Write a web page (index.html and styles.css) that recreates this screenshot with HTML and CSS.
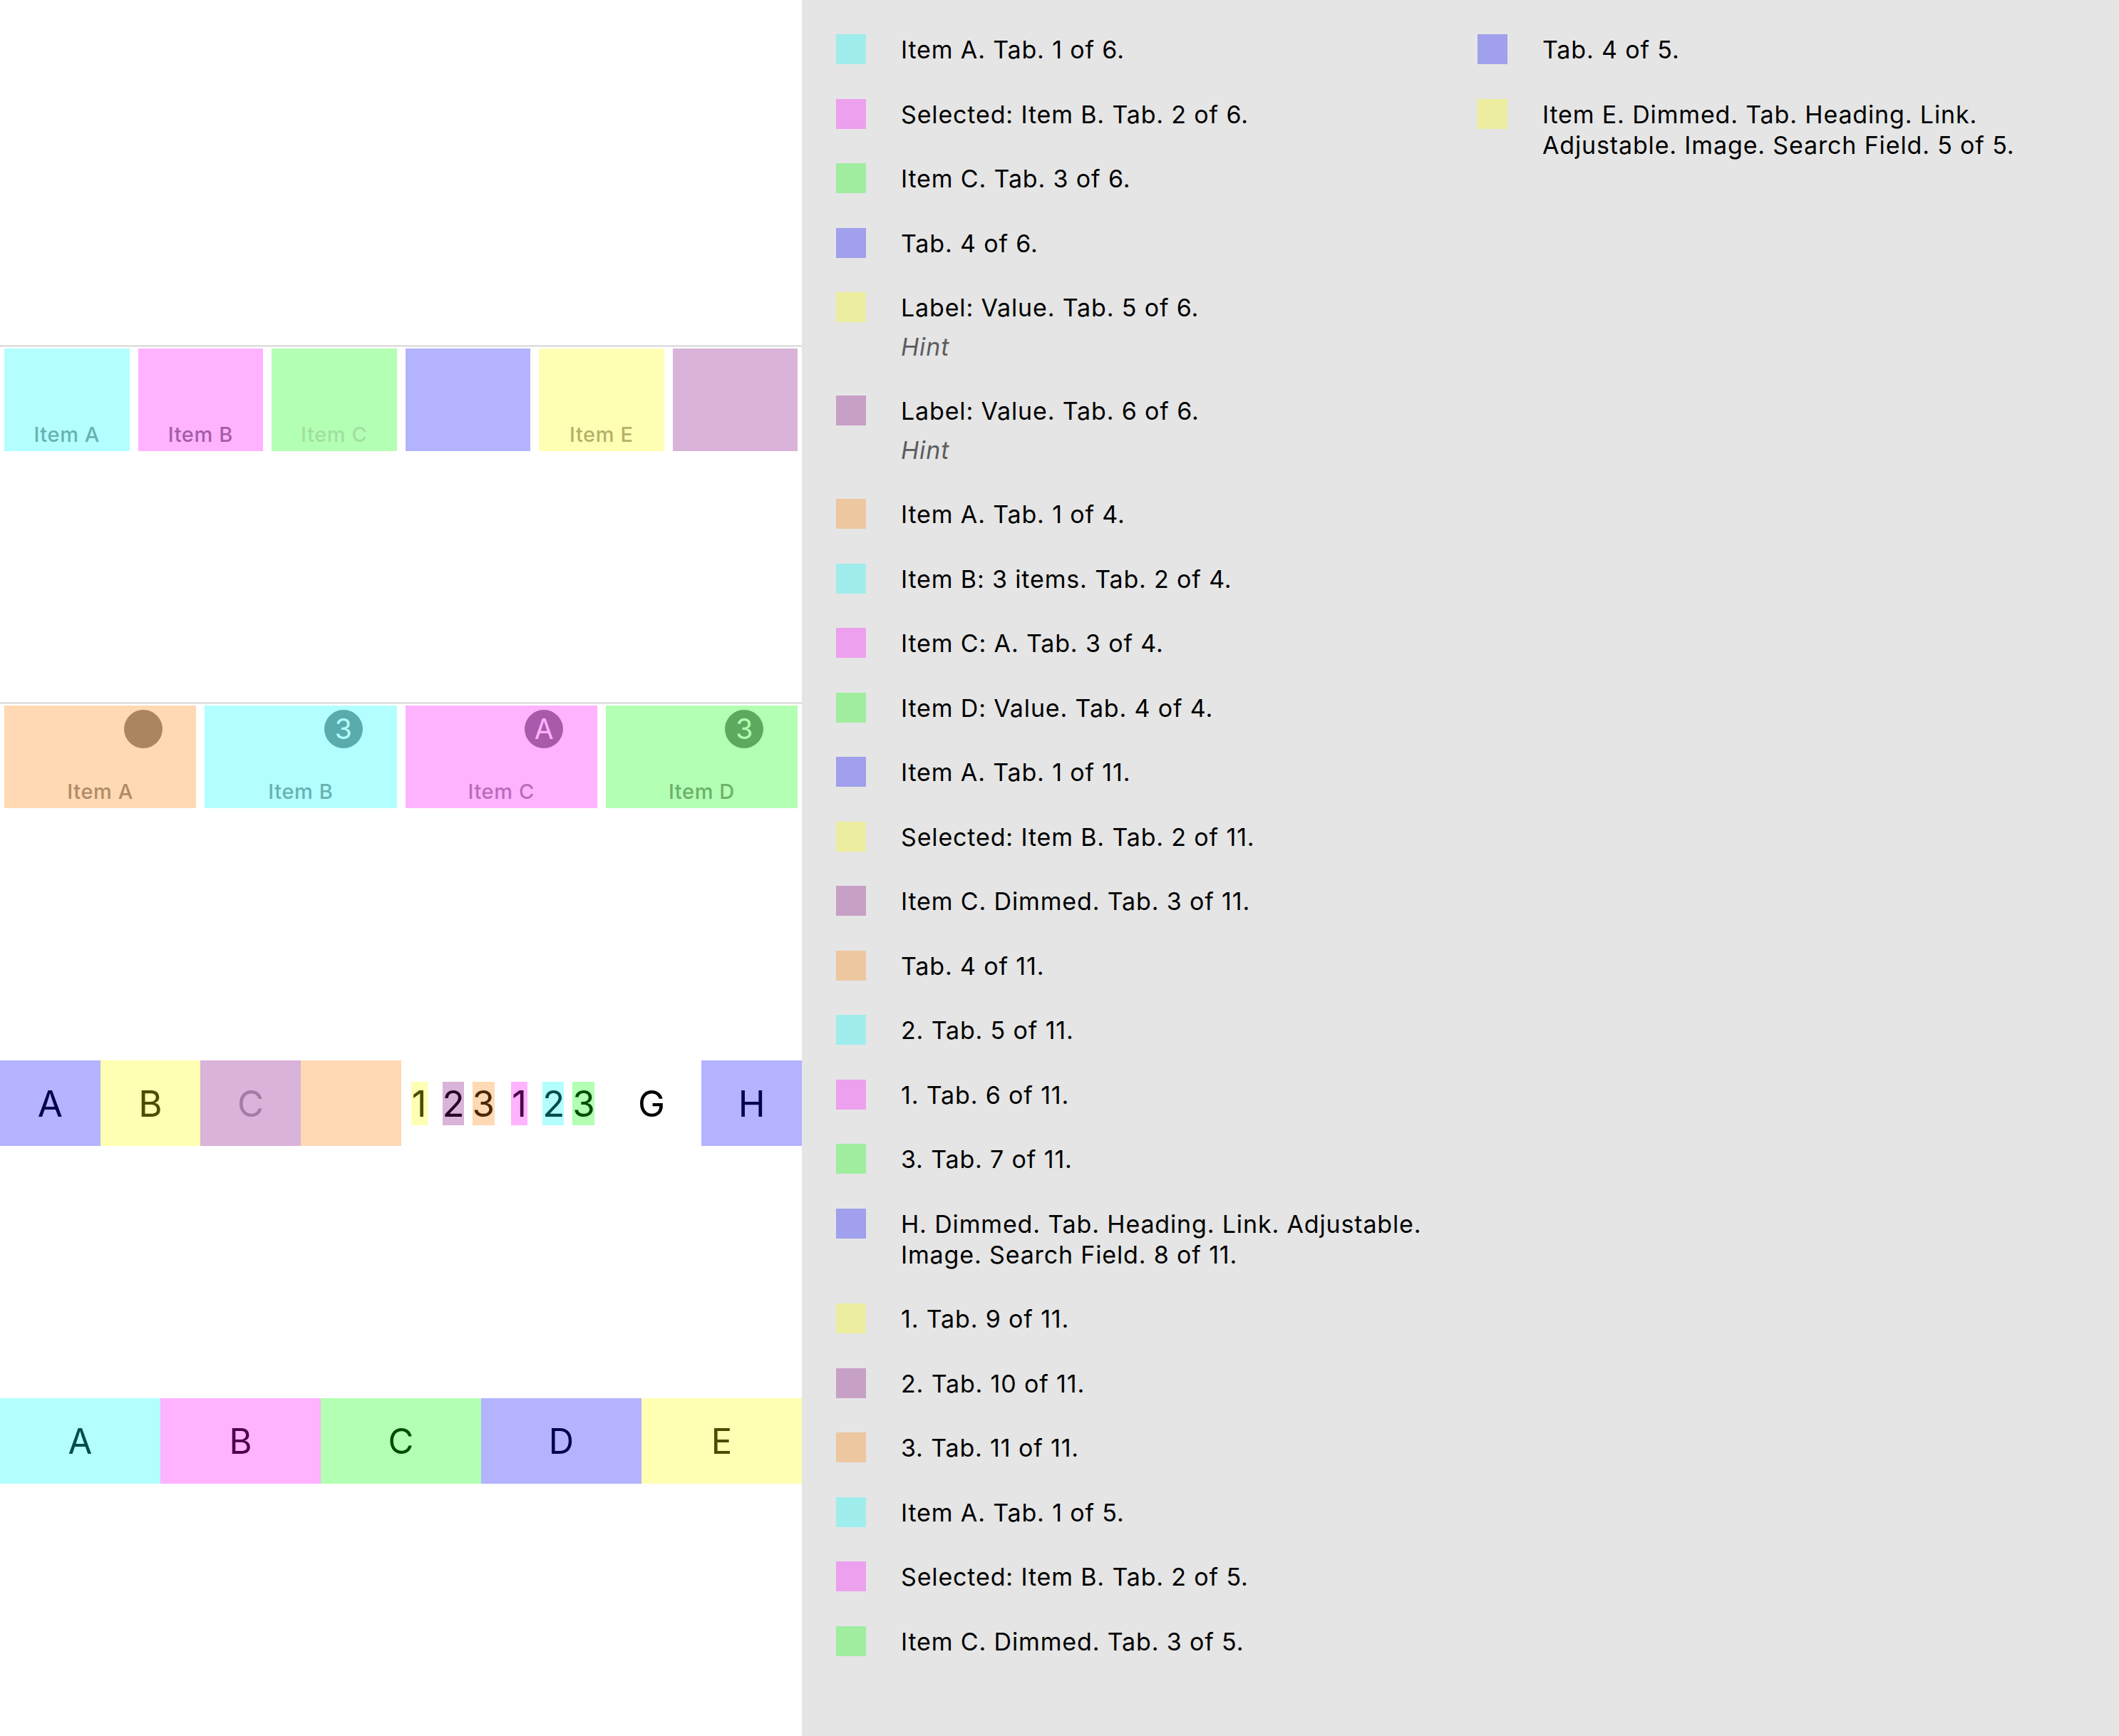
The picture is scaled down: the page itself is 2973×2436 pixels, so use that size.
FILE: index.html
```html
<!DOCTYPE html>
<html lang="en">
<head>
<meta charset="utf-8">
<title>Tab bar accessibility</title>
<link rel="stylesheet" href="styles.css">
</head>
<body>
<div class="page">
  <main class="screen">
    <div class="tabbar">
      <div class="tab bg-cyan"><span class="tab-label c-teal">Item A</span></div>
      <div class="tab bg-magenta"><span class="tab-label c-plum">Item B</span></div>
      <div class="tab bg-green"><span class="tab-label c-faint">Item C</span></div>
      <div class="tab bg-blue"></div>
      <div class="tab bg-yellow"><span class="tab-label c-olive">Item E</span></div>
      <div class="tab bg-purple"></div>
    </div>

    <div class="tabbar tabbar-badged">
      <div class="tab bg-orange"><span class="badge badge-brown"></span><span class="tab-label c-brown">Item A</span></div>
      <div class="tab bg-cyan"><span class="badge badge-teal">3</span><span class="tab-label c-teal">Item B</span></div>
      <div class="tab bg-magenta"><span class="badge badge-plum">A</span><span class="tab-label c-pink">Item C</span></div>
      <div class="tab bg-green"><span class="badge badge-green">3</span><span class="tab-label c-leaf">Item D</span></div>
    </div>

    <div class="segbar segbar-eight">
      <div class="seg bg-blue t-navy">A</div>
      <div class="seg bg-yellow t-olive">B</div>
      <div class="seg bg-purple t-dim">C</div>
      <div class="seg bg-orange"></div>
      <div class="seg seg-group">
        <span class="chip chip-one bg-yellow t-olive">1</span>
        <span class="chip chip-two bg-purple t-grape">2</span>
        <span class="chip chip-three bg-orange t-rust">3</span>
      </div>
      <div class="seg seg-group">
        <span class="chip chip-one bg-magenta t-plum">1</span>
        <span class="chip chip-two bg-cyan t-teal">2</span>
        <span class="chip chip-three bg-green t-forest">3</span>
      </div>
      <div class="seg t-black">G</div>
      <div class="seg bg-blue t-navy">H</div>
    </div>

    <div class="segbar segbar-five">
      <div class="seg bg-cyan t-teal">A</div>
      <div class="seg bg-magenta t-plum">B</div>
      <div class="seg bg-green t-forest">C</div>
      <div class="seg bg-blue t-navy">D</div>
      <div class="seg bg-yellow t-olive">E</div>
    </div>
  </main>

  <aside class="ax-list">
    <div class="ax-row"><span class="sw sw-cyan"></span><div class="ax-text">Item A. Tab. 1 of 6.</div></div>
    <div class="ax-row"><span class="sw sw-magenta"></span><div class="ax-text">Selected: Item B. Tab. 2 of 6.</div></div>
    <div class="ax-row"><span class="sw sw-green"></span><div class="ax-text">Item C. Tab. 3 of 6.</div></div>
    <div class="ax-row"><span class="sw sw-blue"></span><div class="ax-text">Tab. 4 of 6.</div></div>
    <div class="ax-row"><span class="sw sw-yellow"></span><div class="ax-text">Label: Value. Tab. 5 of 6.<div class="ax-hint">Hint</div></div></div>
    <div class="ax-row"><span class="sw sw-purple"></span><div class="ax-text">Label: Value. Tab. 6 of 6.<div class="ax-hint">Hint</div></div></div>
    <div class="ax-row"><span class="sw sw-orange"></span><div class="ax-text">Item A. Tab. 1 of 4.</div></div>
    <div class="ax-row"><span class="sw sw-cyan"></span><div class="ax-text">Item B: 3 items. Tab. 2 of 4.</div></div>
    <div class="ax-row"><span class="sw sw-magenta"></span><div class="ax-text">Item C: A. Tab. 3 of 4.</div></div>
    <div class="ax-row"><span class="sw sw-green"></span><div class="ax-text">Item D: Value. Tab. 4 of 4.</div></div>
    <div class="ax-row"><span class="sw sw-blue"></span><div class="ax-text">Item A. Tab. 1 of 11.</div></div>
    <div class="ax-row"><span class="sw sw-yellow"></span><div class="ax-text">Selected: Item B. Tab. 2 of 11.</div></div>
    <div class="ax-row"><span class="sw sw-purple"></span><div class="ax-text">Item C. Dimmed. Tab. 3 of 11.</div></div>
    <div class="ax-row"><span class="sw sw-orange"></span><div class="ax-text">Tab. 4 of 11.</div></div>
    <div class="ax-row"><span class="sw sw-cyan"></span><div class="ax-text">2. Tab. 5 of 11.</div></div>
    <div class="ax-row"><span class="sw sw-magenta"></span><div class="ax-text">1. Tab. 6 of 11.</div></div>
    <div class="ax-row"><span class="sw sw-green"></span><div class="ax-text">3. Tab. 7 of 11.</div></div>
    <div class="ax-row"><span class="sw sw-blue"></span><div class="ax-text">H. Dimmed. Tab. Heading. Link. Adjustable. Image. Search Field. 8 of 11.</div></div>
    <div class="ax-row"><span class="sw sw-yellow"></span><div class="ax-text">1. Tab. 9 of 11.</div></div>
    <div class="ax-row"><span class="sw sw-purple"></span><div class="ax-text">2. Tab. 10 of 11.</div></div>
    <div class="ax-row"><span class="sw sw-orange"></span><div class="ax-text">3. Tab. 11 of 11.</div></div>
    <div class="ax-row"><span class="sw sw-cyan"></span><div class="ax-text">Item A. Tab. 1 of 5.</div></div>
    <div class="ax-row"><span class="sw sw-magenta"></span><div class="ax-text">Selected: Item B. Tab. 2 of 5.</div></div>
    <div class="ax-row"><span class="sw sw-green"></span><div class="ax-text">Item C. Dimmed. Tab. 3 of 5.</div></div>
    <div class="ax-row"><span class="sw sw-blue"></span><div class="ax-text">Tab. 4 of 5.</div></div>
    <div class="ax-row"><span class="sw sw-yellow"></span><div class="ax-text">Item E. Dimmed. Tab. Heading. Link. Adjustable. Image. Search Field. 5 of 5.</div></div>
  </aside>
</div>
</body>
</html>
```

FILE: styles.css
```css
html, body {
  margin: 0;
  padding: 0;
}

body {
  font-family: Inter, "Noto Sans", "Liberation Sans", sans-serif;
  background: #ffffff;
  color: #000000;
}

.page {
  display: grid;
  grid-template-columns: 1125px 1fr;
  height: 2436px;
  overflow: hidden;
}

/* ---------- left: device screen ---------- */
.screen {
  background: #ffffff;
  padding-top: 485px;
  display: flex;
  flex-direction: column;
}

.tabbar {
  border-top: 1px solid #b3b3b3;
  padding: 3px 6px 0;
  display: grid;
  grid-auto-flow: column;
  grid-auto-columns: minmax(0, 1fr);
  gap: 12px;
}

.tabbar-badged {
  margin-top: 353px;
}

.tab {
  height: 144px;
  position: relative;
  box-sizing: border-box;
  display: flex;
  align-items: flex-end;
  justify-content: center;
  padding-bottom: 5px;
}

.tab-label {
  font-size: 29px;
  font-weight: 500;
  line-height: 36px;
  letter-spacing: 0.6px;
}

.badge {
  position: absolute;
  top: 6px;
  left: calc(50% + 33px);
  width: 54px;
  height: 54px;
  border-radius: 50%;
  font-size: 39px;
  line-height: 54px;
  text-align: center;
}

.badge-brown { background: #ab8460; }
.badge-teal  { background: #5aabab; color: #b3ffff; }
.badge-plum  { background: #aa5aaa; color: #ffb3ff; }
.badge-green { background: #5fa85f; color: #b3ffb3; }

.segbar {
  display: grid;
  grid-auto-flow: column;
  grid-auto-columns: minmax(0, 1fr);
  height: 120px;
  margin-top: 354px;
}

.seg {
  min-width: 0;
  display: flex;
  align-items: center;
  justify-content: center;
  font-size: 51px;
}

.segbar-five .seg {
  font-size: 49px;
}

.seg-group {
  justify-content: flex-start;
  padding-left: 14px;
}

.chip {
  flex: none;
  height: 61px;
  line-height: 61px;
  text-align: center;
  font-size: 51px;
}

.chip-one   { width: 23px; margin-right: 21px; }
.chip-two   { width: 30px; margin-right: 12px; }
.chip-three { width: 31px; }

/* overlay tints (30% over white) */
.bg-cyan    { background: #b3ffff; }
.bg-magenta { background: #ffb3ff; }
.bg-green   { background: #b3ffb3; }
.bg-blue    { background: #b3b3ff; }
.bg-yellow  { background: #ffffb3; }
.bg-purple  { background: #d9b3d9; }
.bg-orange  { background: #ffd9b3; }

/* label colours */
.c-teal  { color: #67b2b2; }
.c-plum  { color: #a45ca8; }
.c-faint { color: #a2dfa2; }
.c-olive { color: #b2b26a; }
.c-brown { color: #b08a66; }
.c-pink  { color: #b96cbb; }
.c-leaf  { color: #6bb06b; }

.t-navy   { color: #00004c; }
.t-olive  { color: #4c4c00; }
.t-dim    { color: #a57ca5; }
.t-grape  { color: #260026; }
.t-rust   { color: #4c2600; }
.t-plum   { color: #4c004c; }
.t-teal   { color: #004c4c; }
.t-forest { color: #004c00; }
.t-black  { color: #000000; }

/* ---------- right: accessibility element list ---------- */
.ax-list {
  background: #e5e5e5;
  box-sizing: border-box;
  height: 2436px;
  padding: 48px 0 48px 48px;
  display: flex;
  flex-direction: column;
  flex-wrap: wrap;
  align-content: flex-start;
  row-gap: 47.5px;
  column-gap: 48px;
}

.ax-row {
  width: 852px;
  display: flex;
  align-items: flex-start;
  gap: 49px;
}

.sw {
  flex: none;
  width: 42px;
  height: 42px;
}

.sw-cyan    { background: #a0eded; }
.sw-magenta { background: #eda0ed; }
.sw-green   { background: #a0eda0; }
.sw-blue    { background: #a0a0ed; }
.sw-yellow  { background: #ededa0; }
.sw-purple  { background: #c7a0c7; }
.sw-orange  { background: #edc7a0; }

.ax-text {
  font-size: 34px;
  line-height: 43px;
  letter-spacing: 0.85px;
  color: #000000;
  max-width: 761px;
}

.ax-hint {
  margin-top: 11.5px;
  font-style: italic;
  color: #5c5c5c;
}
```
